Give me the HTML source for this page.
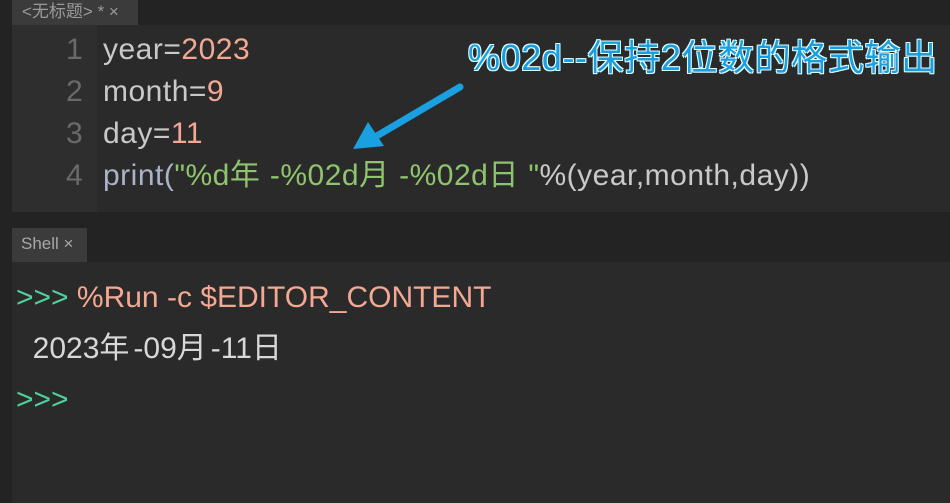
<!DOCTYPE html>
<html><head><meta charset="utf-8"><style>
body{margin:0;width:950px;height:503px;background:#232323;position:relative;overflow:hidden;font-family:"Liberation Sans","Noto Sans CJK SC",sans-serif}
.a{position:absolute;white-space:pre}
.code{font-size:30px;color:#c9c9c9;line-height:42px;letter-spacing:0.5px}
.n{color:#f2a893}.s{color:#8ec46c}.p{color:#aab4c8}
.c{letter-spacing:10px}
.c2{letter-spacing:4px}
</style></head><body>
<div class="a" style="left:12px;top:0;width:126px;height:25px;background:#3b3b3b"></div>
<div class="a" style="left:22px;top:-3px;font-size:17px;color:#9a9a9a">&lt;无标题&gt; * ×</div>
<div class="a" style="left:12px;top:25px;width:938px;height:187px;background:#2a2a2a"></div>
<div class="a" style="left:12px;top:25px;width:85px;height:187px;background:#2e2e2e"></div>
<div class="a code" style="left:66px;top:29px;color:#6a6a6a;text-align:right">1
2
3
4</div>
<div class="a code" style="left:103px;top:29px">year=<span class="n">2023</span>
month=<span class="n">9</span>
day=<span class="n">11</span>
<span class="p">print(</span><span class="s">"%d<span class="c">年</span>-%02d<span class="c">月</span>-%02d<span class="c">日</span>"</span>%(year,month,day))</div>
<div class="a" style="left:468px;top:29px;font-size:36px;letter-spacing:0.6px;color:#1a9ee0;text-shadow:0 0 1px #fff,1px 1px 0 #dff,-1px -1px 0 #dff,1px -1px 0 #dff,-1px 1px 0 #dff">%02d--保持2位数的格式输出</div>
<svg class="a" style="left:0;top:0" width="950" height="503"><line x1="460" y1="87" x2="375" y2="137" stroke="#1aa0e0" stroke-width="7" stroke-linecap="round"/><polygon points="353,149 368,122 384,146" fill="#1aa0e0"/></svg>
<div class="a" style="left:12px;top:228px;width:75px;height:34px;background:#3b3b3b"></div>
<div class="a" style="left:21px;top:234px;font-size:17px;color:#a8a8a8">Shell ×</div>
<div class="a" style="left:12px;top:262px;width:938px;height:241px;background:#2a2a2a"></div>
<div class="a code" style="left:16px;top:272px;line-height:51px;letter-spacing:0"><span style="color:#4fd0a0">&gt;&gt;&gt;</span> <span class="n">%Run -c $EDITOR_CONTENT</span>
<span style="color:#d8d8d8">  2023<span class="c2">年</span>-09<span class="c2">月</span>-11日</span>
<span style="color:#4fd0a0">&gt;&gt;&gt;</span></div>
</body></html>
